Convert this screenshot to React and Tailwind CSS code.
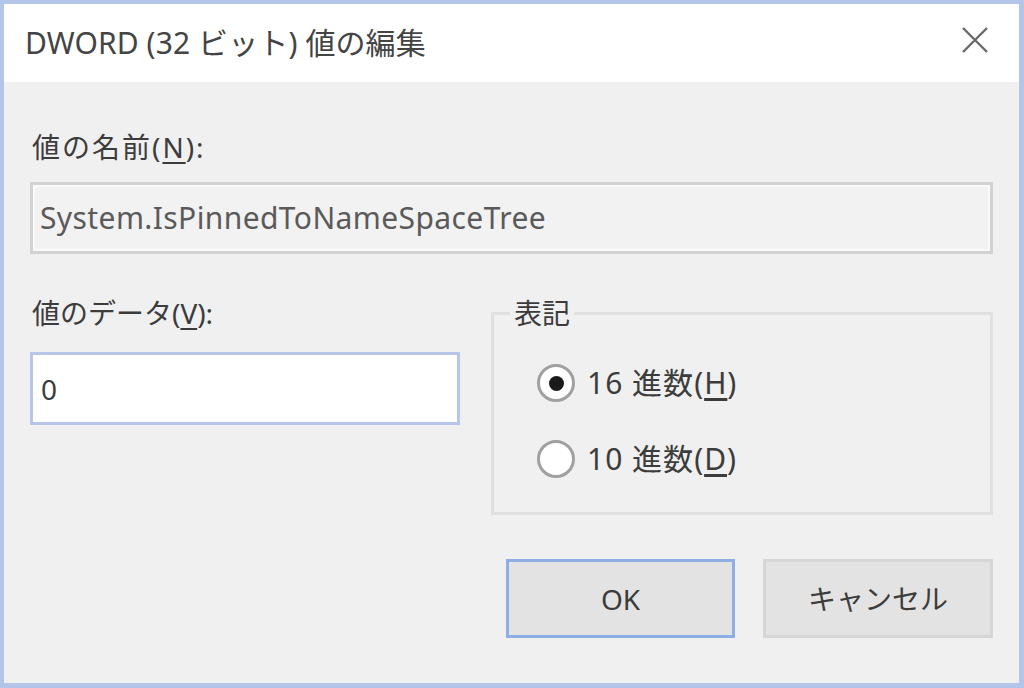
import React from "react";

const font = { fontFamily: '"Noto Sans", "Noto Sans CJK JP", sans-serif' };

function Radio({ checked, label, mnemonic }) {
  return (
    <div className="flex items-center h-[40px]">
      <div className="w-[38px] h-[38px] rounded-full border-[3px] border-[#a0a0a0] bg-white flex items-center justify-center">
        {checked && <div className="w-[15px] h-[15px] rounded-full bg-[#1a1a1a]" />}
      </div>
      <span className="ml-[12px] text-[30px] leading-[36px] tracking-[1px] text-[#3c3c3c]">
        {label}(<span className="underline underline-offset-[4px]">{mnemonic}</span>)
      </span>
    </div>
  );
}

export default function App() {
  return (
    <div
      style={font}
      className="w-[1024px] h-[688px] flex flex-col border-l-[4px] border-t-[4px] border-r-[5px] border-b-[5px] border-[#b3c6ea] bg-[#f0f0f0] overflow-hidden"
    >
      {/* Title bar */}
      <div className="h-[78px] bg-white flex items-center justify-between pl-[21px] pr-[30px] shrink-0">
        <span className="text-[30px] leading-[36px] text-[#444444] tracking-[0.1px]">DWORD (32 ビット) 値の編集</span>
        <svg width="28" height="28" viewBox="0 0 28 28" className="mb-[6px]">
          <path d="M2 2 L26 26 M26 2 L2 26" stroke="#6a6a6a" strokeWidth="2.4" fill="none" />
        </svg>
      </div>

      {/* Body */}
      <div className="flex-1 flex flex-col px-[26px] pt-[47px] bg-[#f0f0f0]">
        <div className="text-[28px] leading-[36px] tracking-[2px] text-[#3c3c3c] pl-[2px]">
          値の名前(<span className="underline underline-offset-[4px]">N</span>):
        </div>
        <div className="mt-[17px] h-[72px] border-[3px] border-[#d2d2d2] bg-[#f2f2f2] flex items-center pl-[7px] shadow-[inset_0_0_0_2px_#fafafa]">
          <span className="text-[30px] leading-[36px] text-[#5a5a5a] tracking-[0.4px]">System.IsPinnedToNameSpaceTree</span>
        </div>

        <div className="mt-[41px] flex gap-[31px]">
          <div className="w-[430px] flex flex-col">
            <div className="text-[28px] leading-[36px] text-[#3c3c3c] pl-[2px]">
              値のデータ(<span className="underline underline-offset-[4px]">V</span>):
            </div>
            <div className="mt-[21px] h-[73px] border-[3px] border-[#b7c5e8] bg-white flex items-center pl-[8px]">
              <span className="text-[28px] leading-[36px] text-[#3c3c3c]">0</span>
            </div>
          </div>
          <fieldset className="flex-1 h-[220px] border-[3px] border-[#e0e0e0]">
            <legend className="ml-[16px] px-[4px] text-[28px] leading-[36px] text-[#3c3c3c]">表記</legend>
            <div className="pl-[43px] pt-[32px] flex flex-col gap-[36px]">
              <Radio checked label="16 進数" mnemonic="H" />
              <Radio label="10 進数" mnemonic="D" />
            </div>
          </fieldset>
        </div>

        <div className="mt-[44px] flex justify-end gap-[28px]">
          <button className="w-[229px] h-[79px] border-[3px] border-[#8eaee6] bg-[#e3e3e3] text-[28px] text-[#3c3c3c] flex items-center justify-center">
            OK
          </button>
          <button className="w-[230px] h-[79px] border-[3px] border-[#d6d6d6] bg-[#e3e3e3] text-[28px] text-[#3c3c3c] flex items-center justify-center">
            キャンセル
          </button>
        </div>
      </div>
    </div>
  );
}
